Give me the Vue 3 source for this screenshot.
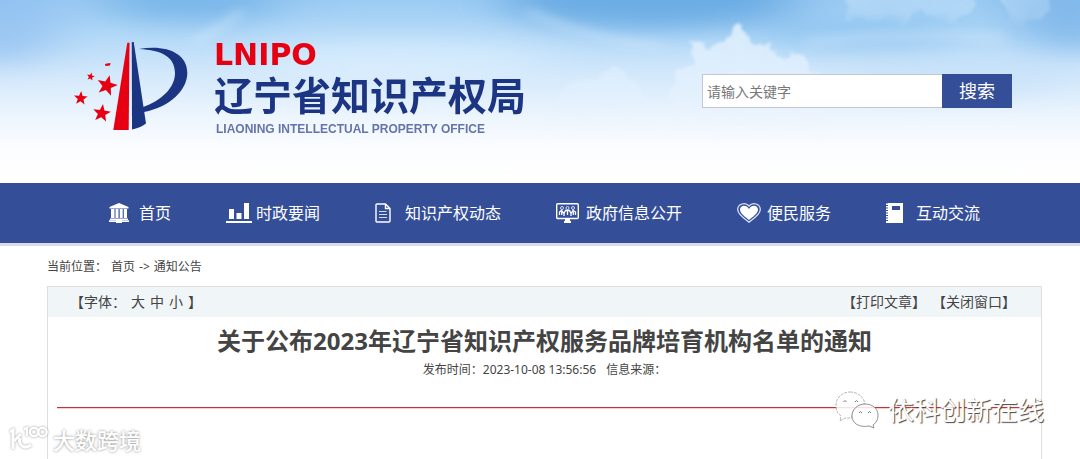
<script setup>
import { ref } from 'vue'

const keyword = ref('')
const navItems = [
  { icon: 'hall', label: '首页' },
  { icon: 'chart', label: '时政要闻' },
  { icon: 'doc', label: '知识产权动态' },
  { icon: 'screen', label: '政府信息公开' },
  { icon: 'heart', label: '便民服务' },
  { icon: 'book', label: '互动交流' },
]
const sizes = ['大', '中', '小']

const star = (cx, cy, r, turn) =>
  Array.from({ length: 10 }, (_, i) => {
    const a = ((i * 36 + turn - 90) * Math.PI) / 180
    const d = i % 2 ? r * 0.42 : r
    return `${(cx + d * Math.cos(a)).toFixed(1)},${(cy + d * Math.sin(a)).toFixed(1)}`
  }).join(' ')
const stars = [
  star(16.7, 36.7, 4.2, 12),
  star(33, 45.7, 10.8, 14),
  star(6.7, 58.3, 7.2, 4),
  star(27.7, 73.3, 9.3, 8),
]
</script>

<template>
  <div class="page">
    <header class="banner">
      <svg class="sky" viewBox="0 0 1080 183" preserveAspectRatio="none" aria-hidden="true">
        <defs>
          <linearGradient id="skyBase" x1="0" y1="0" x2="0" y2="1">
            <stop offset="0" stop-color="#9bcbf3" />
            <stop offset="0.2" stop-color="#b5daf8" />
            <stop offset="0.42" stop-color="#d5e9fb" />
            <stop offset="0.62" stop-color="#ebf4fd" />
            <stop offset="0.82" stop-color="#fcfdff" />
            <stop offset="1" stop-color="#ffffff" />
          </linearGradient>
          <filter id="soft" x="-50%" y="-80%" width="200%" height="260%"><feGaussianBlur stdDeviation="28 12" /></filter>
          <filter id="wisp" x="-30%" y="-50%" width="160%" height="200%"><feGaussianBlur stdDeviation="7 4" /></filter>
          <filter id="puff" x="-20%" y="-20%" width="140%" height="140%">
            <feTurbulence type="fractalNoise" baseFrequency="0.06" numOctaves="3" seed="9" result="n" />
            <feDisplacementMap in="SourceGraphic" in2="n" scale="18" xChannelSelector="R" yChannelSelector="G" />
            <feGaussianBlur stdDeviation="1.5" />
          </filter>
          <linearGradient id="cloud" x1="0" y1="0" x2="0" y2="1">
            <stop offset="0" stop-color="#e4f2fe" stop-opacity="0.85" />
            <stop offset="0.45" stop-color="#e6f2fe" stop-opacity="0.6" />
            <stop offset="0.85" stop-color="#f0f7fe" stop-opacity="0" />
          </linearGradient>
        </defs>
        <rect width="1080" height="183" fill="url(#skyBase)" />
        <g filter="url(#soft)">
          <ellipse cx="650" cy="0" rx="150" ry="30" fill="#5ba2df" opacity="0.75" />
          <ellipse cx="190" cy="2" rx="90" ry="20" fill="#66aae4" opacity="0.65" />
          <ellipse cx="0" cy="20" rx="60" ry="45" fill="#8fbdf0" opacity="0.65" />
          <ellipse cx="1070" cy="10" rx="60" ry="42" fill="#78b1e7" opacity="0.75" />
          <ellipse cx="860" cy="32" rx="110" ry="16" fill="#83bdee" opacity="0.7" />
          <ellipse cx="400" cy="62" rx="150" ry="22" fill="#ddf0fd" opacity="0.65" />
          <ellipse cx="960" cy="78" rx="120" ry="16" fill="#bfddf8" opacity="0.6" />
        </g>
        <g filter="url(#wisp)" fill="none" stroke="#d6ecfc" stroke-linecap="round">
          <path d="M195 42Q225 26 240 12" stroke-width="5" opacity="0.7" />
          <path d="M530 12Q580 38 660 46" stroke-width="9" opacity="0.35" />
          <path d="M810 42Q900 30 1000 38" stroke-width="12" opacity="0.3" />
        </g>
        <g filter="url(#puff)" fill="url(#cloud)">
          <path d="M672 96L680 72L690 62L689 46L702 42L712 48L728 42L734 26L744 30L752 46L766 42L780 56L790 48L802 54L812 70L832 88L830 160H660Z" />
          <path d="M548 104L572 84L594 78L612 62L622 74L638 84L656 110L650 150H540Z" opacity="0.6" />
          <path d="M844 -4L848 20L862 16L872 30L884 22L894 32L908 16L928 12L946 28L962 18L976 -4Z" opacity="0.38" />
          <path d="M1000 -4L1006 12L1002 30L1022 36L1036 18L1050 8L1048 -4Z" opacity="0.35" />
        </g>
      </svg>

      <div class="brand">
        <svg class="emblem" viewBox="0 0 116 94" aria-hidden="true">
          <path fill="#e60012" d="M53.300 2.700H55.500L54.700 90H39.300Z" />
          <path fill="#1b3583" d="M57.800 2H59.700L72 83.500Q66 88 58 89.500Z" />
          <path fill="#1b3583" d="M65 9C92 4.500 113.300 13 113.300 33C113.300 50 96 67 70 72L68 67.500C89 60 101 47 101 33C101 17 88 10 65 9Z" />
          <g fill="#e60012">
            <path d="M31 24L33 23.500L36.500 23L36 25.500L31.500 26Z" />
            <polygon v-for="(points, i) in stars" :key="i" :points="points" />
          </g>
        </svg>
        <div class="names">
          <span class="abbr">LNIPO</span>
          <span class="cn">辽宁省知识产权局</span>
          <span class="en">LIAONING INTELLECTUAL PROPERTY OFFICE</span>
        </div>
      </div>

      <form class="search" @submit.prevent>
        <input v-model="keyword" type="text" placeholder="请输入关键字" aria-label="请输入关键字" />
        <button type="submit">搜索</button>
      </form>
    </header>

    <nav class="nav">
      <a v-for="item in navItems" :key="item.icon" href="#">
        <span class="slot">
          <svg v-if="item.icon === 'hall'" width="20" height="20" viewBox="0 0 20 20" fill="#fff">
            <path d="M10 0L19.500 4V5.500H0.500V4ZM2 6H5.500V15H2ZM6.500 6H9.500V15H6.500ZM10.700 6H13.700V15H10.700ZM14.800 6H18V15H14.800ZM1 15.500H19V17H1ZM0 17.300H20V19H0ZM7 16H13V20H7Z" />
          </svg>
          <svg v-else-if="item.icon === 'chart'" width="26" height="20" viewBox="0 0 26 20" fill="#fff">
            <path d="M3 6H8V16H3ZM10.500 10H15.500V16H10.500ZM18 0H23V16H18ZM0 18H26V20H0Z" />
          </svg>
          <svg v-else-if="item.icon === 'doc'" width="16" height="20" viewBox="0 0 16 20" fill="none" stroke="#fff">
            <path stroke-width="1.400" d="M2 1H10.500L15 5.500V18Q15 19 14 19H2Q1 19 1 18V2Q1 1 2 1ZM10.500 1V5.500H15" />
            <path stroke-width="1" opacity="0.8" d="M4 8.500H11.500M4 11.500H12M4 14.500H12" />
          </svg>
          <svg v-else-if="item.icon === 'screen'" width="23" height="20" viewBox="0 0 23 20" fill="none" stroke="#fff">
            <rect x="0.700" y="0.700" width="21.600" height="14.800" rx="1" stroke-width="1.400" />
            <path fill="#fff" stroke="none" d="M9 16H14V18H15V20H8V18H9Z" />
            <g stroke-width="1" opacity="0.8"><circle cx="6" cy="5" r="1.500" /><circle cx="11.500" cy="5" r="1.500" /><circle cx="17" cy="5" r="1.500" /></g>
            <path stroke-width="1.300" d="M3.500 12V9L5.500 7.500L8 10.500V13M8 10.500L9.500 7.500H13.500L15 10.500V13M15 10.500L17 7.500L19.500 9V12M5.700 9V12M11.500 8V12M17.300 9V12" />
          </svg>
          <svg v-else-if="item.icon === 'heart'" width="24" height="20" viewBox="0 0 24 20">
            <path fill="none" stroke="#dfe7ff" stroke-width="1.200" d="M12 19.200C8 16 0.700 11.500 0.700 6.500C0.700 0.500 8.500-1 12 3C15.500-1 23.300 0.500 23.300 6.500C23.300 11.500 16 16 12 19.200Z" />
            <path fill="#fff" d="M12 17C9 14.500 3 10.500 3 6.500C3 2 9.500 1.200 12 6C14.500 1.200 21 2 21 6.500C21 10.500 15 14.500 12 17Z" />
          </svg>
          <svg v-else width="17" height="20" viewBox="0 0 17 20" fill="#fff">
            <path fill-rule="evenodd" d="M2 0H17V20H2ZM6 3V7H14V3Z" />
            <path d="M0 0.500H3V2H0ZM0 3H3V4.500H0ZM0 5.500H3V7H0ZM0 8H3V9.500H0ZM0 10.500H3V12H0ZM0 13H3V14.500H0ZM0 15.500H3V17H0ZM0 18H3V20H0Z" />
          </svg>
        </span>
        <span>{{ item.label }}</span>
      </a>
    </nav>

    <main class="content">
      <div class="crumbs">
        <span>当前位置：</span>
        <a href="#">首页</a>
        <span>-&gt;</span>
        <a href="#">通知公告</a>
      </div>
      <article class="panel">
        <div class="toolbar">
          <div class="group sizes">
            <span>【字体：</span>
            <button v-for="s in sizes" :key="s" type="button">{{ s }}</button>
            <span>】</span>
          </div>
          <div class="group">
            <button type="button">【打印文章】</button>
            <button type="button">【关闭窗口】</button>
          </div>
        </div>
        <h1>关于公布2023年辽宁省知识产权服务品牌培育机构名单的通知</h1>
        <p class="meta"><span>发布时间：2023-10-08 13:56:56</span><span>信息来源：</span></p>
        <div class="rule" role="separator"></div>
      </article>
    </main>

    <div class="mark account">
      <svg width="44" height="38" viewBox="0 0 44 38" aria-hidden="true">
        <g fill="#fff" fill-opacity="0.850" stroke="#888">
          <path stroke-width="0.600" stroke-dasharray="3 1" d="M15 1C23 1 29 6 30 13C22 14 16 19 17 27L10 27L5 30L6 25C2 22 1 19 1 14C1 6 8 1 15 1Z" />
          <path stroke-width="0.900" d="M30 13C38 13 43 18 43 24C43 29 41 32 38 34L39 37L34 35C24 37 17 32 17 25C17 18 23 13 30 13Z" />
        </g>
        <path fill="none" stroke="#777" d="M8.500 11Q10 8 11.500 11M20 11Q21.500 8 23 11M24 22Q25.500 19 27 22M33 22Q34.500 19 36 22" />
      </svg>
      <span>依科创新在线</span>
    </div>
    <div class="mark source">
      <svg width="40" height="30" viewBox="0 0 40 30" fill="none" stroke="#fff" stroke-width="3" aria-hidden="true">
        <path d="M1 7L4 5V24M12 9L5 16M11 13C9 20 15 25 22 20" />
        <path stroke-width="2.400" d="M15 4L18 3V11" />
        <circle cx="25" cy="7" r="4.200" stroke-width="2.400" />
        <circle cx="33.500" cy="7" r="4.200" stroke-width="2.400" />
      </svg>
      <span>大数跨境</span>
    </div>
  </div>
</template>

<style>
body {
  margin: 0;
  background: #fff;
}
</style>

<style scoped>
.page {
  position: relative;
  display: flex;
  flex-direction: column;
  min-height: 100vh;
  overflow: hidden;
  font-family: "Noto Sans", "Noto Sans CJK SC", sans-serif;
  color: #444;
}
a {
  color: inherit;
  text-decoration: none;
}
button {
  padding: 0;
  border: 0;
  background: none;
  color: inherit;
  font: inherit;
  cursor: pointer;
}
.banner {
  position: relative;
  display: flex;
  justify-content: space-between;
  align-items: flex-start;
  padding: 40px 68px 41px 74px;
}
.sky {
  position: absolute;
  inset: 0;
  width: 100%;
  height: 100%;
}
.brand {
  position: relative;
  display: flex;
  gap: 24px;
}
.emblem {
  width: 116px;
  height: 94px;
}
.names {
  display: flex;
  flex-direction: column;
  white-space: nowrap;
}
.abbr {
  color: #e60012;
  font: 700 30px/30px "DejaVu Sans", sans-serif;
}
.cn {
  color: #1b3583;
  font-family: "Noto Sans CJK SC", sans-serif;
  font-size: 39px;
  font-weight: 700;
  line-height: 46px;
}
.en {
  padding-left: 2px;
  color: #6574aa;
  font: 700 12px/26px "Liberation Sans", Arial, sans-serif;
}
.search {
  position: relative;
  display: flex;
  margin-top: 34px;
}
.search input {
  box-sizing: border-box;
  width: 240px;
  height: 34px;
  padding: 0 4px;
  border: 1px solid #c3c7cf;
  border-right: 0;
  border-radius: 0;
  outline: 0;
  background: #fff;
  color: #444;
  font: 14px/20px "Noto Sans", "Noto Sans CJK SC", sans-serif;
}
.search input::placeholder {
  color: #777;
  opacity: 1;
}
.search button {
  width: 70px;
  height: 34px;
  background: #344f98;
  color: #fff;
  font-size: 18px;
  line-height: 34px;
}
.nav {
  display: flex;
  justify-content: center;
  gap: 55px;
  padding: 0 38px 0 47px;
  border-bottom: 3px solid #dadbe7;
  background: #344f98;
  color: #fff;
  font-size: 16px;
  line-height: 60px;
  white-space: nowrap;
}
.nav a {
  display: flex;
  align-items: center;
}
.slot {
  display: flex;
  width: 30px;
}
.content {
  display: flex;
  flex: 1;
  flex-direction: column;
  padding: 11px 38px 0 47px;
}
.crumbs {
  display: flex;
  gap: 4px;
  font-size: 12px;
  line-height: 20px;
}
.panel {
  flex: 1;
  margin-top: 9px;
  border: 1px solid #dedede;
  border-bottom: 0;
}
.toolbar {
  display: flex;
  justify-content: space-between;
  padding: 0 25px 0 22px;
  background: #f0f5f8;
  font-size: 14px;
  line-height: 30px;
}
.group {
  display: flex;
  gap: 6px;
}
.sizes {
  gap: 5px;
}
h1 {
  margin: 7px 0 0;
  font-size: 24px;
  line-height: 34px;
  text-align: center;
}
.meta {
  display: flex;
  justify-content: center;
  gap: 10px;
  margin: 0;
  font-size: 12px;
  line-height: 24px;
}
.rule {
  height: 1px;
  margin: 25px 9px 0;
  background: #c8322f;
  box-shadow: 0 1px 0 #f6d0cf;
}
.mark {
  position: absolute;
  display: flex;
  align-items: center;
  color: #fff;
  white-space: nowrap;
}
.account {
  right: 36px;
  bottom: 30px;
  gap: 9px;
  font-size: 26px;
  line-height: 38px;
  text-shadow: 1px 1px 1px #444;
}
.source {
  bottom: 4px;
  left: 9px;
  gap: 4px;
  font-size: 22px;
  font-weight: 500;
  line-height: 30px;
  text-shadow: 0 0 3px #888;
}
.source svg {
  filter: drop-shadow(0 0 1px #999);
}
</style>
